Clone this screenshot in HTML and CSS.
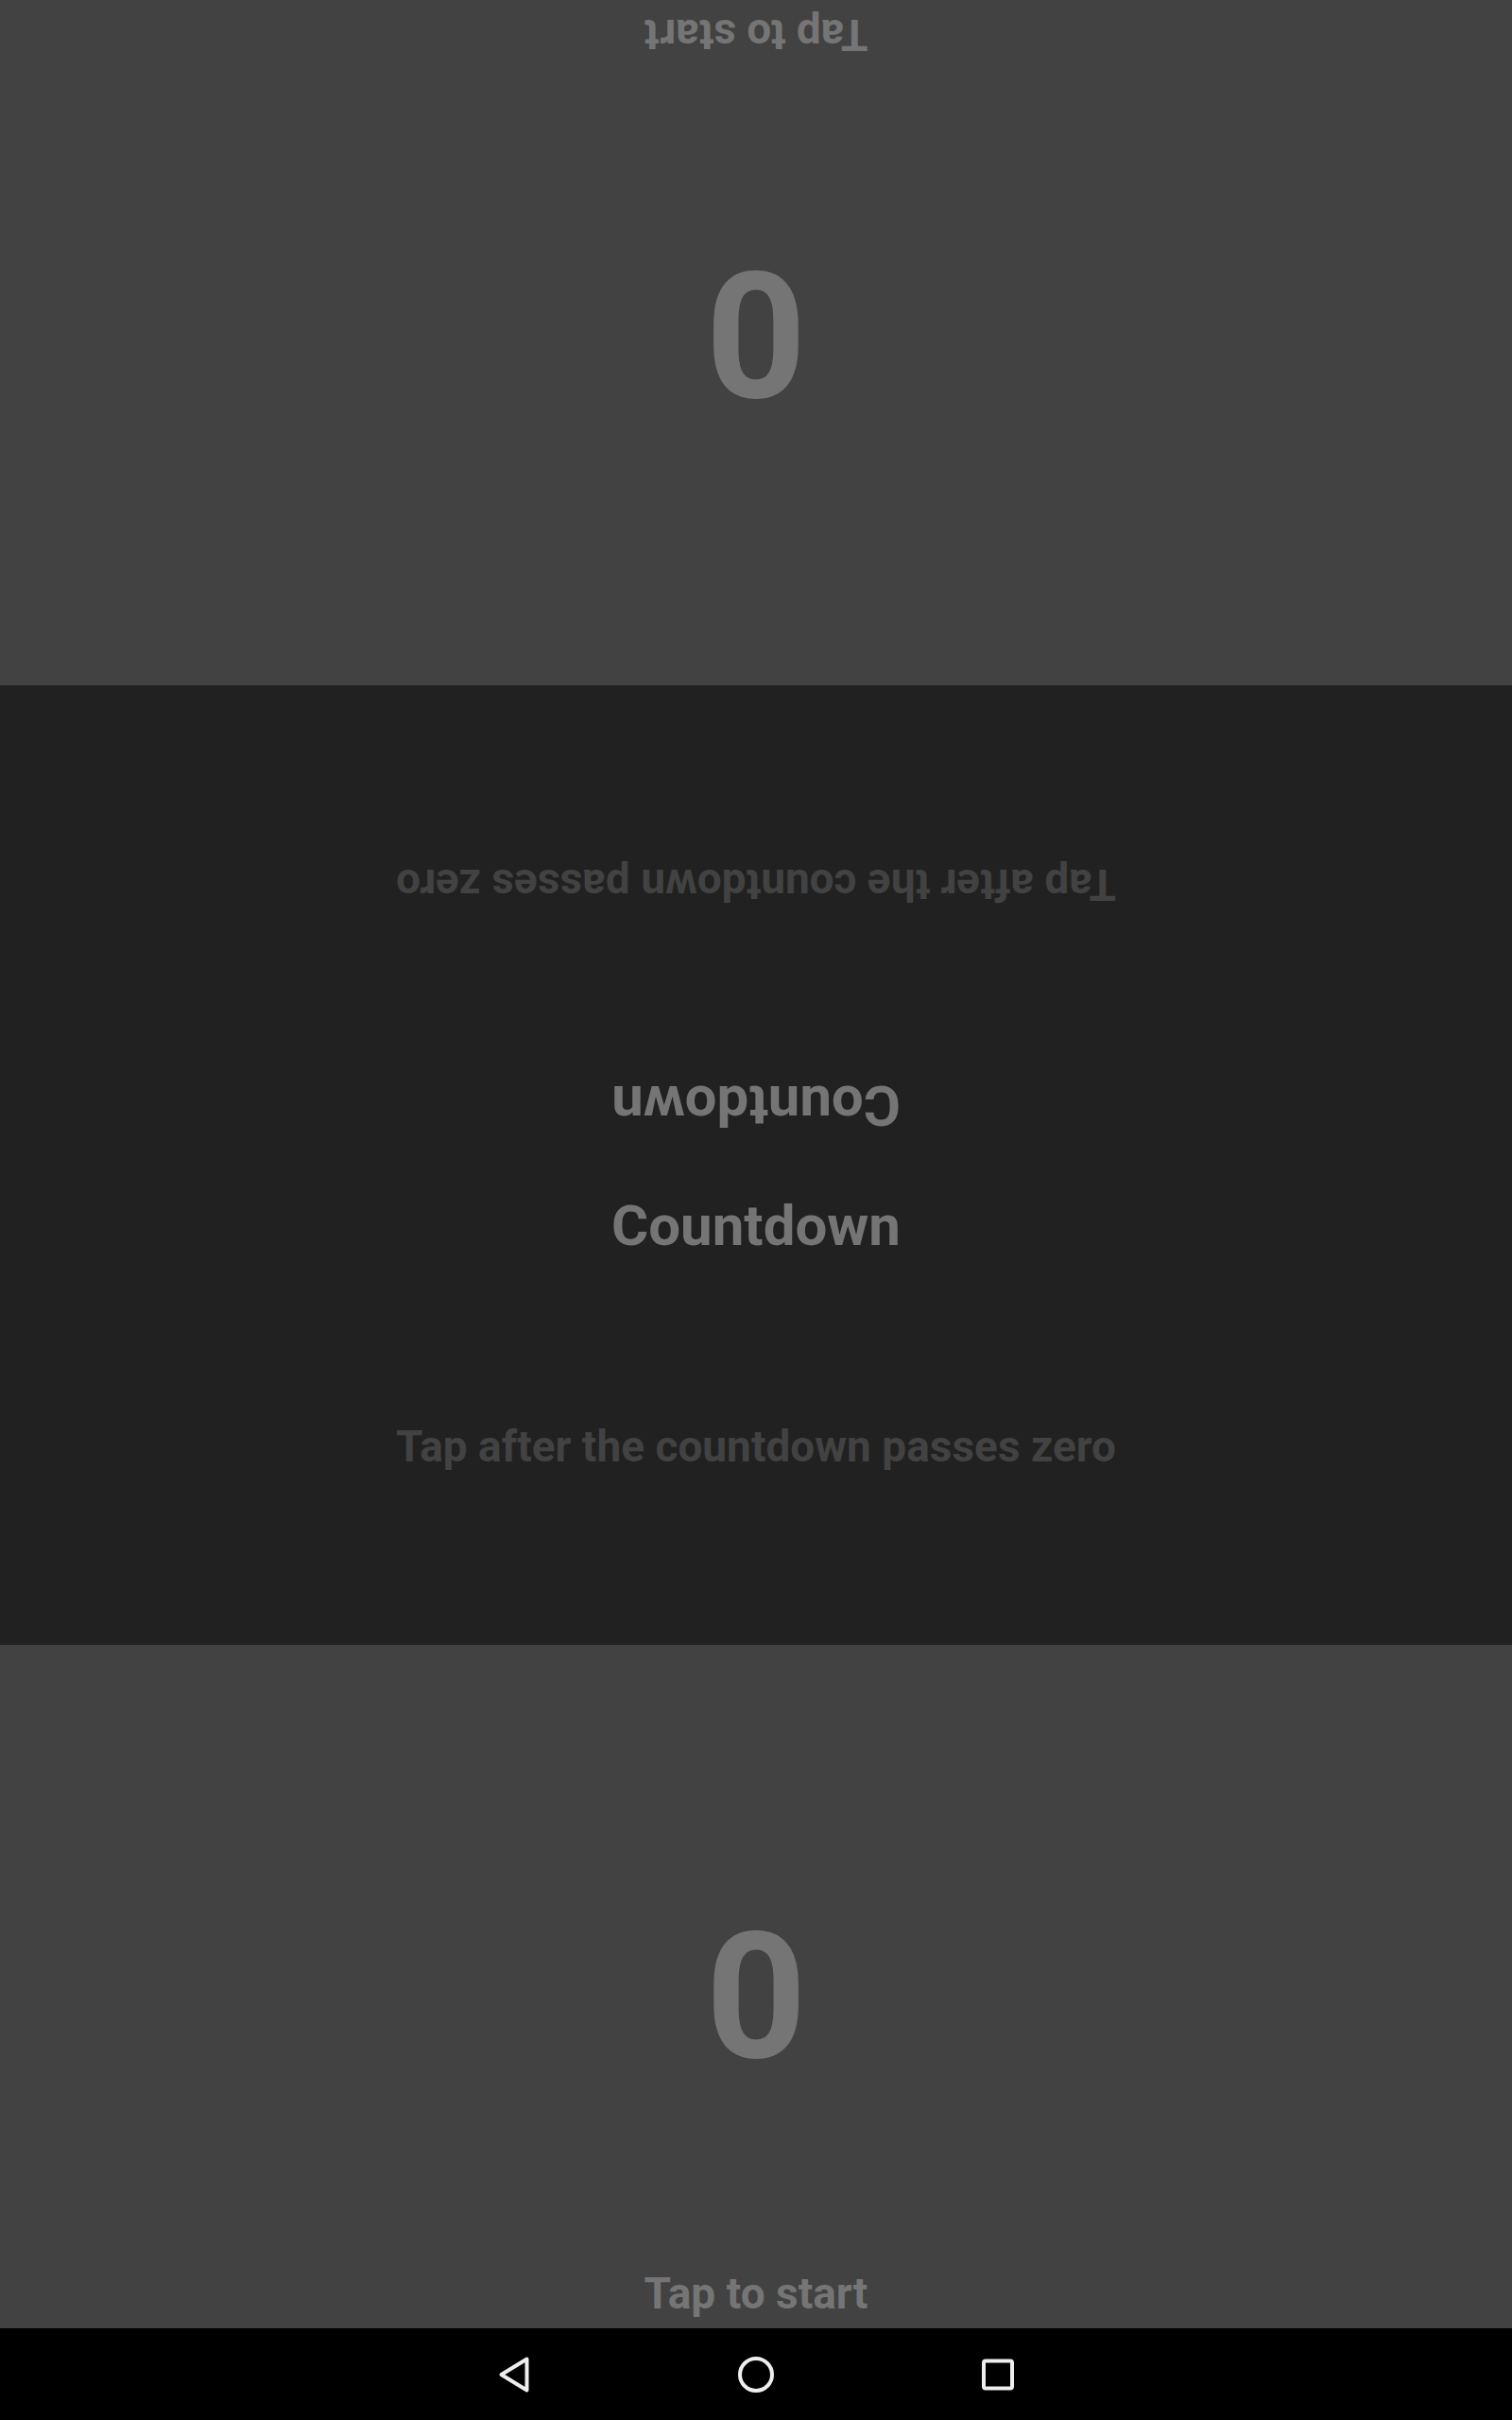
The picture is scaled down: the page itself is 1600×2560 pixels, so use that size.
FILE: index.html
```html
<!DOCTYPE html>
<html lang="en">
<head>
<meta charset="utf-8">
<title>Countdown</title>
<link rel="stylesheet" href="styles.css">
</head>
<body>
<div class="screen">
  <section class="panel panel-top">
    <div class="count">0</div>
    <div class="hint">Tap to start</div>
  </section>
  <section class="middle">
    <div class="half half-flipped">
      <div class="title">Countdown</div>
      <div class="subtitle">Tap after the countdown passes zero</div>
    </div>
    <div class="half">
      <div class="title">Countdown</div>
      <div class="subtitle">Tap after the countdown passes zero</div>
    </div>
  </section>
  <section class="panel panel-bottom">
    <div class="count">0</div>
    <div class="hint">Tap to start</div>
  </section>
  <nav class="navbar">
    <div class="navbtn">
      <svg width="48" height="48" viewBox="0 0 48 48"><path d="M10.5 24 L37.5 7.5 L37.5 40.5 Z" fill="none" stroke="#eeeeee" stroke-width="4" stroke-linejoin="round"/></svg>
    </div>
    <div class="navbtn">
      <svg width="48" height="48" viewBox="0 0 48 48"><circle cx="24" cy="24" r="17" fill="none" stroke="#eeeeee" stroke-width="4"/></svg>
    </div>
    <div class="navbtn">
      <svg width="48" height="48" viewBox="0 0 48 48"><rect x="9" y="9.5" width="30" height="29" rx="2" fill="none" stroke="#eeeeee" stroke-width="4"/></svg>
    </div>
  </nav>
</div>
</body>
</html>
```

FILE: styles.css
```css
html, body {
  margin: 0;
  padding: 0;
  background: #000;
}
.screen {
  width: 1600px;
  height: 2560px;
  display: flex;
  flex-direction: column;
  font-family: Roboto, "Liberation Sans", sans-serif;
  font-weight: 700;
  overflow: hidden;
}
.panel {
  display: grid;
  background: #424242;
  color: #757575;
}
.panel-top {
  height: 725px;
  transform: rotate(180deg);
}
.panel-bottom {
  height: 723px;
}
.panel > * {
  grid-area: 1 / 1;
  justify-self: center;
}
.count {
  align-self: center;
  font-size: 186px;
  line-height: 218px;
  margin-top: 20px;
}
.hint {
  align-self: end;
  font-size: 46px;
  line-height: 56px;
  padding-bottom: 9px;
}
.middle {
  height: 1015px;
  background: #212121;
  display: grid;
  grid-template-rows: 1fr 1fr;
}
.half {
  display: flex;
  flex-direction: column;
  align-items: center;
}
.half-flipped {
  transform: rotate(180deg);
}
.title {
  font-size: 60px;
  line-height: 72px;
  margin-top: 28px;
  color: #757575;
}
.subtitle {
  font-size: 46px;
  line-height: 54px;
  margin-top: 170px;
  color: #424242;
}
.navbar {
  height: 97px;
  background: #000;
  display: flex;
  justify-content: center;
  align-items: center;
}
.navbtn {
  width: 256px;
  display: flex;
  justify-content: center;
  align-items: center;
}
.navbtn svg {
  display: block;
}
```
